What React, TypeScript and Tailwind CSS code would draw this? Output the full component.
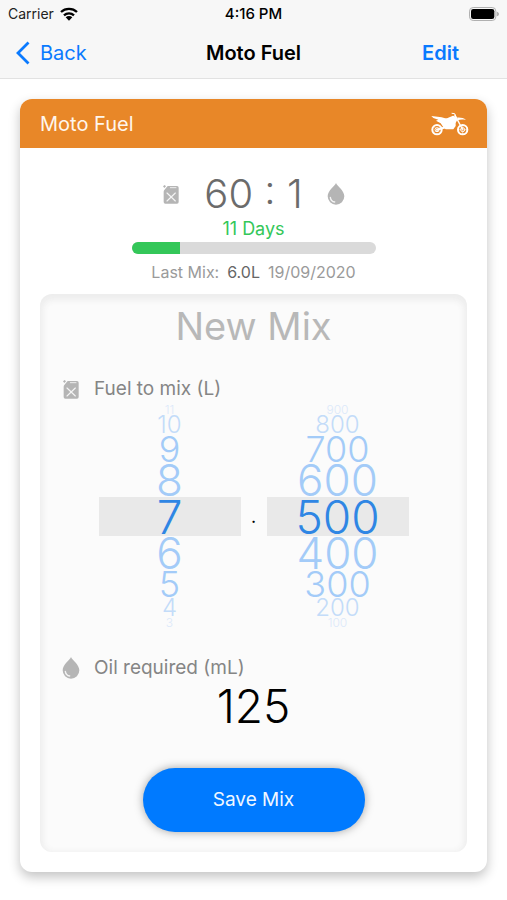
import { useState } from 'react'
import clsx from 'clsx'

const LITRES = Array.from({ length: 21 }, (_, i) => i)
const MILLILITRES = [0, 100, 200, 300, 400, 500, 600, 700, 800, 900]
const RATIO = 60

// Row look by distance from the selected value
const ROW_STYLES = [
  'h-[39px] text-[46px] bg-[#e9e9e9] text-[#2f86e4]',
  'h-[34px] text-[44px] text-[#a3cbf8]',
  'h-[28px] text-[36px] text-[#a3cbf8]',
  'h-[20px] text-[24px] text-[#c3dcf9]',
  'h-[10px] text-[12px] text-[#dbe9fa]',
]

function JerryCanIcon() {
  return (
    <svg viewBox="0 0 48 57" className="h-[19px] w-[18px]" aria-hidden="true">
      <path
        fill="#b5b5b5"
        d="M15 3h27a5 5 0 0 1 5 5v43a5 5 0 0 1-5 5H7a5 5 0 0 1-5-5V20a8 8 0 0 1 2-5l8-10a4 4 0 0 1 3-2z"
      />
      <path fill="#b5b5b5" d="M0 4l5-4 4 4-5 5z" />
      <path d="M22 8h17" stroke="#eeeeee" strokeWidth="3" strokeLinecap="round" />
      <path d="M12 24l25 24M37 24L12 48" stroke="#f4f4f4" strokeWidth="3.5" strokeLinecap="round" />
    </svg>
  )
}

function DropIcon() {
  return (
    <svg viewBox="0 0 52 66" className="h-[22px] w-[18px]" aria-hidden="true">
      <path fill="#b5b5b5" d="M26 0c3 9 25 22 25 40a25 25 0 0 1-50 0C1 22 23 9 26 0z" />
      <path d="M9 43c1 8 6 13 13 14" fill="none" stroke="#f4f4f4" strokeWidth="4" strokeLinecap="round" />
    </svg>
  )
}

function DirtBikeIcon() {
  return (
    <svg viewBox="0 0 114 72" className="h-6 w-[38px]" role="img" aria-label="Motorbike">
      <g fill="none" stroke="#fff">
        <circle cx="18" cy="53" r="14" strokeWidth="6" />
        <circle cx="95" cy="53" r="14" strokeWidth="6" />
        <circle cx="18" cy="53" r="6" strokeWidth="3" />
        <circle cx="95" cy="53" r="6" strokeWidth="3" />
        <path d="M95 39v28M81 53h28M8 43l20 20M8 63l20-20" strokeWidth="1.5" />
        <path d="M71 8l24 45" strokeWidth="4" />
        <path d="M63 4l8 1 3 8" strokeWidth="3" strokeLinecap="round" />
        <path d="M18 53l26-7" strokeWidth="6" strokeLinecap="round" />
      </g>
      <path
        fill="#fff"
        d="M1 12l25 3c8 1 14 4 22 4 6-2 12-6 18-8l9 3 4 9-5 10v9l-7 10H44l-8-8-7-10-14-8 7-3-15-5z"
      />
      <path fill="#fff" d="M78 17c10-1 20 1 27 7-9-2-18-2-24 1z" />
    </svg>
  )
}

function WheelPicker({ label, values, index, onChange }: {
  label: string
  values: number[]
  index: number
  onChange: (index: number) => void
}) {
  return (
    <div role="group" aria-label={label} className="flex flex-1 flex-col">
      {[4, 3, 2, 1, 0, -1, -2, -3, -4].map((offset) => {
        const i = index + offset
        const row = ROW_STYLES[Math.abs(offset)]
        if (i < 0 || i >= values.length) {
          return <div key={offset} className={row} />
        }
        return (
          <button
            key={offset}
            type="button"
            aria-pressed={offset === 0}
            onClick={() => onChange(i)}
            className={clsx('flex items-center justify-center font-light leading-none', row)}
          >
            {values[i]}
          </button>
        )
      })}
    </div>
  )
}

export default function App() {
  const [litres, setLitres] = useState(7)
  const [millis, setMillis] = useState(5)
  const oil = Math.round((LITRES[litres] * 1000 + MILLILITRES[millis]) / RATIO)
  const used = 20

  return (
    <div className="min-h-screen bg-white pb-7 font-['Inter',sans-serif]">
      {/* Status bar and navigation */}
      <header className="border-b border-[#e2e2e2] bg-[#f7f7f7]">
        <div className="grid h-7 grid-cols-3 items-center px-2 text-[15px] text-[#222]">
          <div className="flex items-center gap-1.5">
            <span className="text-sm">Carrier</span>
            <svg viewBox="0 0 54 42" className="h-3.5 w-[18px]" aria-hidden="true">
              <g fill="none" stroke="#000" strokeWidth="7">
                <path d="M3 15a35 35 0 0 1 48 0" />
                <path d="M12 25a22 22 0 0 1 30 0" />
              </g>
              <path d="M17 31a14 14 0 0 1 20 0L27 41z" />
            </svg>
          </div>
          <span className="text-center font-medium text-black">4:16 PM</span>
          <svg viewBox="0 0 90 42" className="h-3.5 w-[30px] justify-self-end" aria-hidden="true">
            <rect x="1.5" y="1.5" width="79" height="39" rx="11" fill="#f7f7f7" stroke="#b0b0b0" strokeWidth="3" />
            <rect x="6" y="6" width="70" height="30" rx="7" />
            <path fill="#b0b0b0" d="M83 14c5 1 7 4 7 7s-2 6-7 7z" />
          </svg>
        </div>
        <nav className="grid h-[50px] grid-cols-3 items-center pl-4 pr-12 text-xl text-[#0a7aff]">
          <a href="#back" className="flex items-center gap-2.5">
            <svg viewBox="0 0 14 24" className="h-6 w-3.5" aria-hidden="true">
              <path d="M12.5 1.5L2 12l10.5 10.5" fill="none" stroke="currentColor" strokeWidth="2.8" />
            </svg>
            Back
          </a>
          <h1 className="whitespace-nowrap pl-8 text-center font-semibold text-black">Moto Fuel</h1>
          <button type="button" className="justify-self-end font-semibold">Edit</button>
        </nav>
      </header>

      <main className="mx-5 mt-5 overflow-hidden rounded-xl bg-white pb-5 shadow-[0_5px_12px_rgba(0,0,0,0.24)]">
        <div className="flex h-[49px] items-center justify-between bg-[#e88728] pl-5 pr-[18px]">
          <h2 className="text-xl text-[#fff6ec]">Moto Fuel</h2>
          <DirtBikeIcon />
        </div>

        {/* Ratio and last mix */}
        <section className="flex flex-col items-center pt-6">
          <div className="flex h-11 items-center gap-6">
            <JerryCanIcon />
            <span className="text-[40px] font-light leading-none text-[#6b6b6b]">60 : 1</span>
            <DropIcon />
          </div>
          <p className="h-[26px] text-lg leading-[26px] text-[#34c759]">11 Days</p>
          <div
            role="progressbar"
            aria-label="Fuel age"
            aria-valuenow={used}
            className="h-3 w-[244px] overflow-hidden rounded-full bg-[#dadada]"
          >
            <div className="h-full bg-[#34c759]" style={{ width: `${used}%` }} />
          </div>
          <p className="mt-2 flex gap-2 text-base leading-5 text-[#9a9a9a]">
            <span>Last Mix:</span>
            <span className="text-[#666]">6.0L</span>
            <span>19/09/2020</span>
          </p>
        </section>

        {/* New mix */}
        <section className="mx-5 mt-3 rounded-xl bg-[#fbfbfb] px-[22px] pb-5 shadow-[inset_0_3px_6px_3px_#ededed]">
          <h2 className="h-[81px] pt-2 text-center text-[38px] leading-[48px] text-[#b8b8b8]">New Mix</h2>
          <div className="flex h-7 items-center gap-3.5 text-[19px] text-[#858585]">
            <JerryCanIcon />
            <h3>Fuel to mix (L)</h3>
          </div>
          <div className="mx-auto mt-0.5 flex max-w-[310px] items-center">
            <WheelPicker label="Litres" values={LITRES} index={litres} onChange={setLitres} />
            <span className="w-[26px] text-center text-lg text-black">.</span>
            <WheelPicker label="Millilitres" values={MILLILITRES} index={millis} onChange={setMillis} />
          </div>
          <div className="mt-[26px] flex h-7 items-center gap-3.5 text-[19px] text-[#858585]">
            <DropIcon />
            <h3>Oil required (mL)</h3>
          </div>
          <p className="h-[86px] text-center text-[46px] font-light leading-[48px] text-black">{oil}</p>
          <button
            type="button"
            className="mx-auto block h-16 w-[222px] rounded-full bg-[#007aff] text-[19px] text-[#f0f7ff] shadow-[0_0_10px_rgba(0,0,0,0.35)]"
          >
            Save Mix
          </button>
        </section>
      </main>
    </div>
  )
}
